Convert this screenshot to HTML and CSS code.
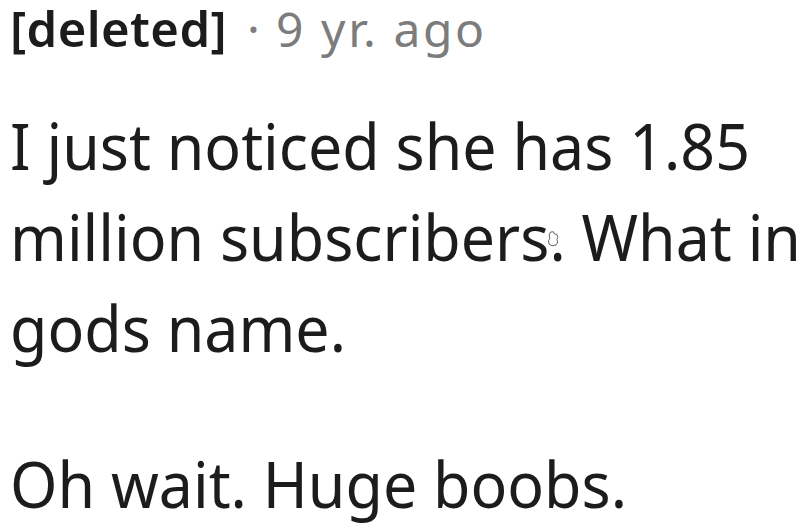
FILE: index.html
```html
<!DOCTYPE html>
<html lang="en">
<head>
<meta charset="utf-8">
<link rel="stylesheet" href="styles.css">
<title>Comment</title>
</head>
<body>
<article class="comment">
  <header class="meta">
    <span class="author">[deleted]</span>
    <span class="sep">·</span>
    <span class="time">9 yr. ago</span>
  </header>
  <div class="body">
    <p>I just noticed she has 1.85 million subscribers. What in gods name.</p>
    <p>Oh wait. Huge boobs.</p>
  </div>
  <svg class="cursor" width="14" height="17" viewBox="0 0 14 17" aria-hidden="true">
    <path d="M4.5 1 L7.5 0.8 L8.5 3 L11 3.5 L11.8 6.5 L10.8 8.5 L11.8 11 L10 14 L6 14.8 L3 13 L2.5 10 L3.8 7.5 L3.2 4 Z" fill="#ffffff" stroke="#555555" stroke-width="0.9"/>
  </svg>
</article>
</body>
</html>
```

FILE: styles.css
```css
html, body {
  margin: 0;
  padding: 0;
  background: #ffffff;
  overflow: hidden;
}
body {
  font-family: "Noto Sans", sans-serif;
  color: #1c1c1c;
}
.comment {
  position: relative;
  padding: 0 0 0 10px;
}
.meta {
  display: flex;
  align-items: baseline;
  font-size: 48px;
  line-height: 57px;
  color: #7c7c7c;
}
.author {
  color: #1c1c1c;
  font-weight: 600;
  font-size: 49px;
  letter-spacing: 0.4px;
}
.sep {
  margin-left: 20px;
}
.time {
  margin-left: 16px;
  letter-spacing: 2.6px;
}
.body {
  margin-top: 43px;
  font-size: 63px;
  line-height: 91px;
  width: 830px;
  transform: scaleX(0.966);
  transform-origin: left top;
}
.body p {
  margin: 0 0 65px 0;
}
.cursor {
  position: absolute;
  left: 546px;
  top: 231px;
}
```
